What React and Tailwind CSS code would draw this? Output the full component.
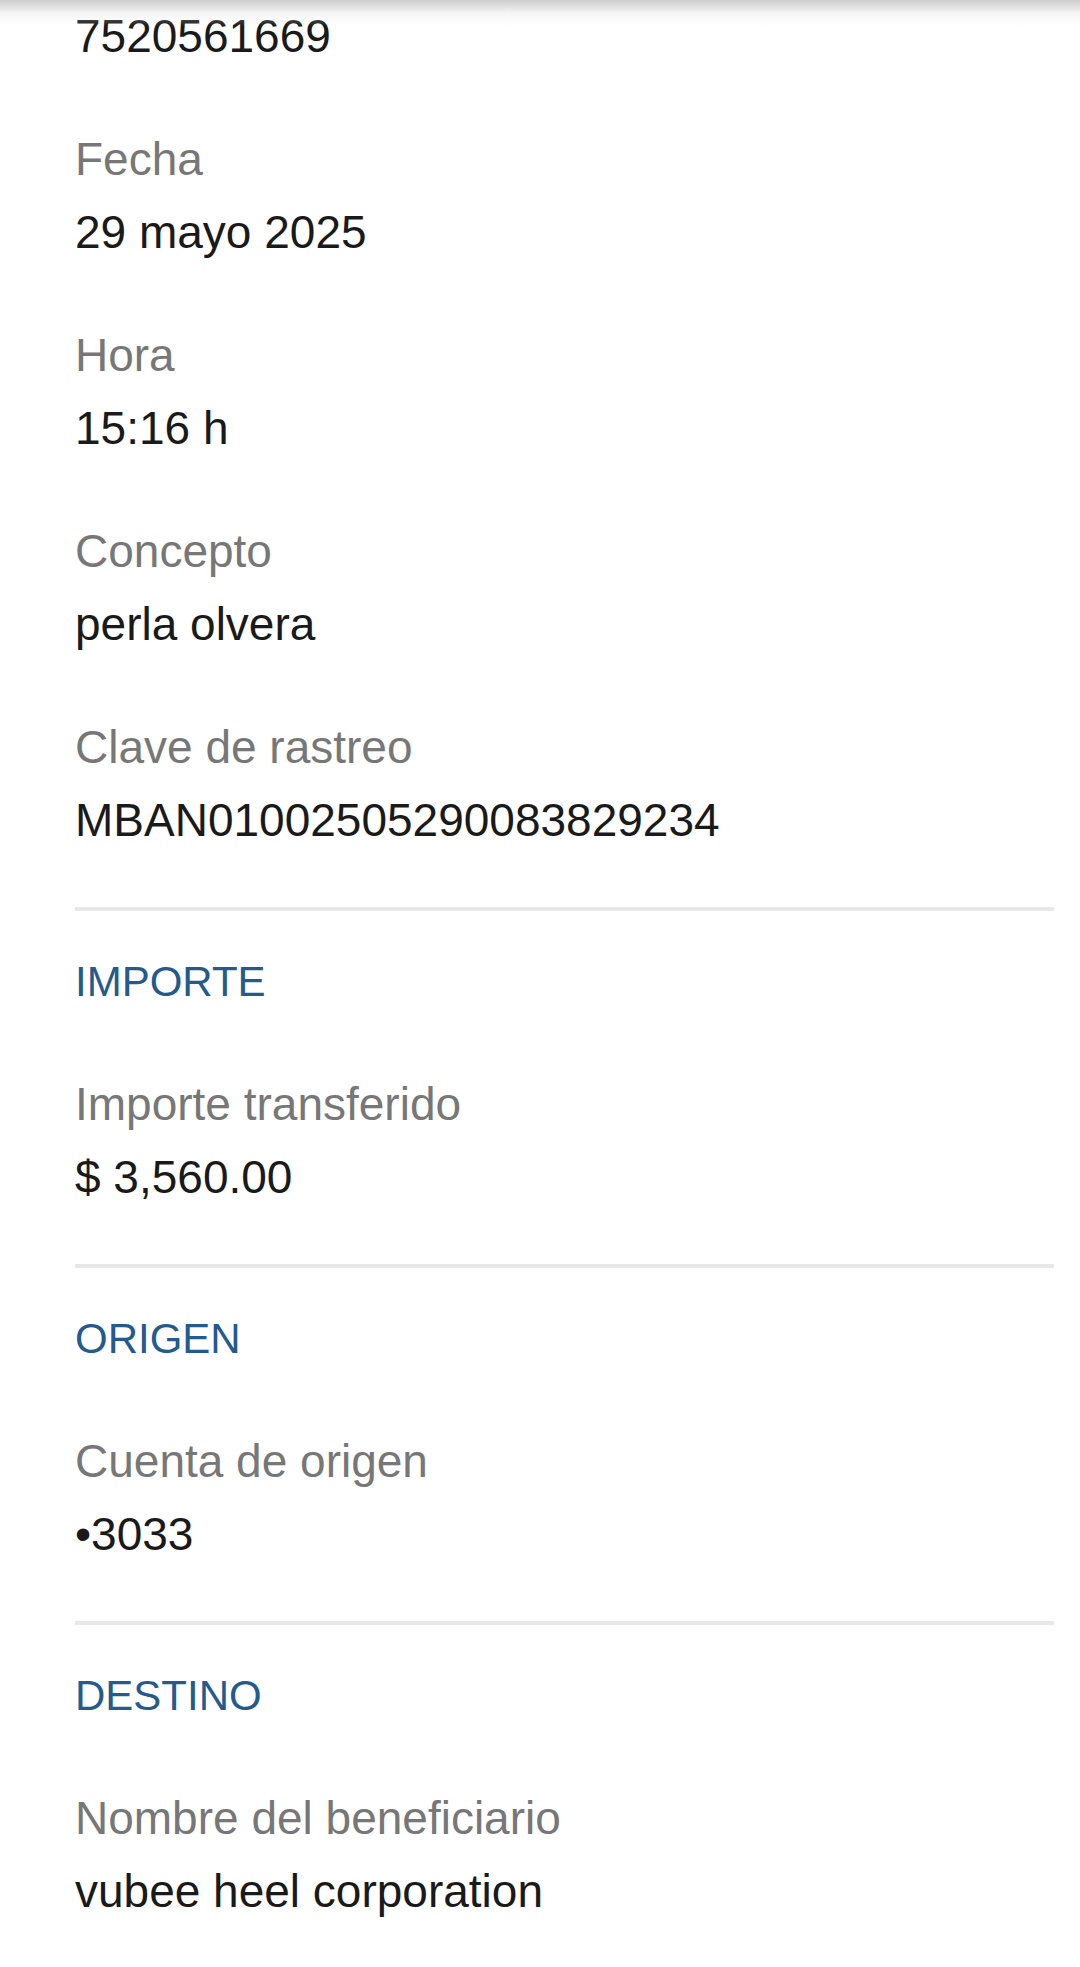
import React from 'react';

const font = { fontFamily: '"Liberation Sans", Arial, Helvetica, sans-serif' };

const Field = ({ label, value }) => (
    <div className="flex flex-col">
        <span className="text-[46px] leading-[73px] text-[#777777]">{label}</span>
        <span className="text-[46px] leading-[73px] text-[#1a1a1a]">{value}</span>
    </div>
);

const Section = ({ title, children }) => (
    <div className="flex flex-col">
        <div className="h-[4px] bg-[#e8e8e8]" />
        <h3 className="mt-[34px] text-[42px] leading-[73px] text-[#245a8c]">{title}</h3>
        <div className="mt-[50px] mb-[50px] flex flex-col gap-[50px]">{children}</div>
    </div>
);

const App = () => {
    return (
        <div className="relative min-h-[1967px] bg-white" style={font}>
            <div className="pl-[75px] pr-[26px]">
                {/* Detalle */}
                <div className="flex flex-col gap-[50px] mb-[50px]">
                    <span className="text-[46px] leading-[73px] text-[#1a1a1a]">7520561669</span>
                    <Field label="Fecha" value="29 mayo 2025" />
                    <Field label="Hora" value="15:16 h" />
                    <Field label="Concepto" value="perla olvera" />
                    <Field label="Clave de rastreo" value="MBAN01002505290083829234" />
                </div>

                <Section title="IMPORTE">
                    <Field label="Importe transferido" value="$ 3,560.00" />
                </Section>

                <Section title="ORIGEN">
                    <Field label="Cuenta de origen" value="•3033" />
                </Section>

                <Section title="DESTINO">
                    <Field label="Nombre del beneficiario" value="vubee heel corporation" />
                </Section>
            </div>

            {/* shadow cast by the header above */}
            <div className="pointer-events-none absolute inset-x-0 top-0 h-[26px] bg-linear-to-b from-[#c8c8c8]/90 via-[#e6e6e6]/40 to-transparent" />
        </div>
    );
};

export default App;
